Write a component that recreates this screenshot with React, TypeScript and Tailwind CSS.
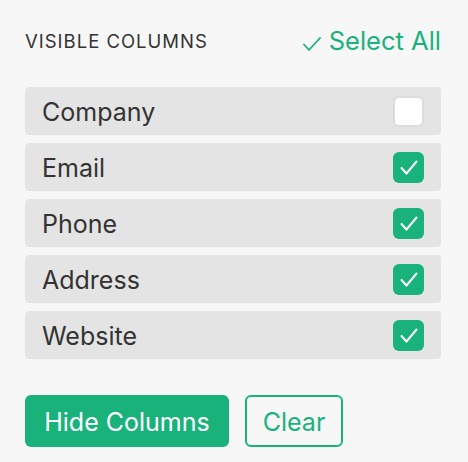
import React from "react";

const items = [
  { label: "Company", checked: false },
  { label: "Email", checked: true },
  { label: "Phone", checked: true },
  { label: "Address", checked: true },
  { label: "Website", checked: true },
];

export default function App() {
  return (
    <div className="w-[468px] h-[462px] bg-[#f7f7f7] text-[#333333] px-[25px] pt-[21px]" style={{ fontFamily: "Inter, 'Noto Sans', sans-serif" }}>
      <div className="flex items-center justify-between h-[40px] w-[416px]">
        <span className="text-[18.5px] tracking-[1px] text-[#333] pt-[1px]">VISIBLE COLUMNS</span>
        <button className="flex items-center text-[#19b27b] text-[25.5px]">
          <svg viewBox="0 0 18 14" className="w-[18px] h-[14px] mr-[8px] mt-[5px]" fill="none" stroke="currentColor" strokeWidth={1.8} strokeLinecap="round" strokeLinejoin="round">
            <path d="M1 7.5l5 5.5L17 1" />
          </svg>
          Select All
        </button>
      </div>
      <div className="mt-[26px] flex flex-col gap-[8px] w-[416px]">
        {items.map((it) => (
          <div key={it.label} className="flex items-center justify-between h-[48px] bg-[#e4e4e4] rounded-[4px] pl-[17px] pr-[17px]">
            <span className="text-[25px] pt-[3px]">{it.label}</span>
            {it.checked ? (
              <span className="w-[31px] h-[31px] rounded-[6px] bg-[#19b27b] flex items-center justify-center text-white">
                <svg viewBox="0 0 18 15" className="w-[18px] h-[15px]" fill="none" stroke="currentColor" strokeWidth={2} strokeLinecap="round" strokeLinejoin="round">
                  <path d="M1.5 8l5 5.5L16.5 1.5" />
                </svg>
              </span>
            ) : (
              <span className="w-[31px] h-[31px] rounded-[6px] bg-white border-2 border-[#dcdcdc]" />
            )}
          </div>
        ))}
      </div>
      <div className="mt-[36px] flex gap-[16px]">
        <button className="h-[52px] w-[204px] rounded-[6px] bg-[#19b27b] text-white text-[25px] pt-[4px]">Hide Columns</button>
        <button className="h-[52px] w-[98px] rounded-[6px] border-2 border-[#19b27b] text-[#19b27b] text-[25px] pt-[3px]">Clear</button>
      </div>
    </div>
  );
}
